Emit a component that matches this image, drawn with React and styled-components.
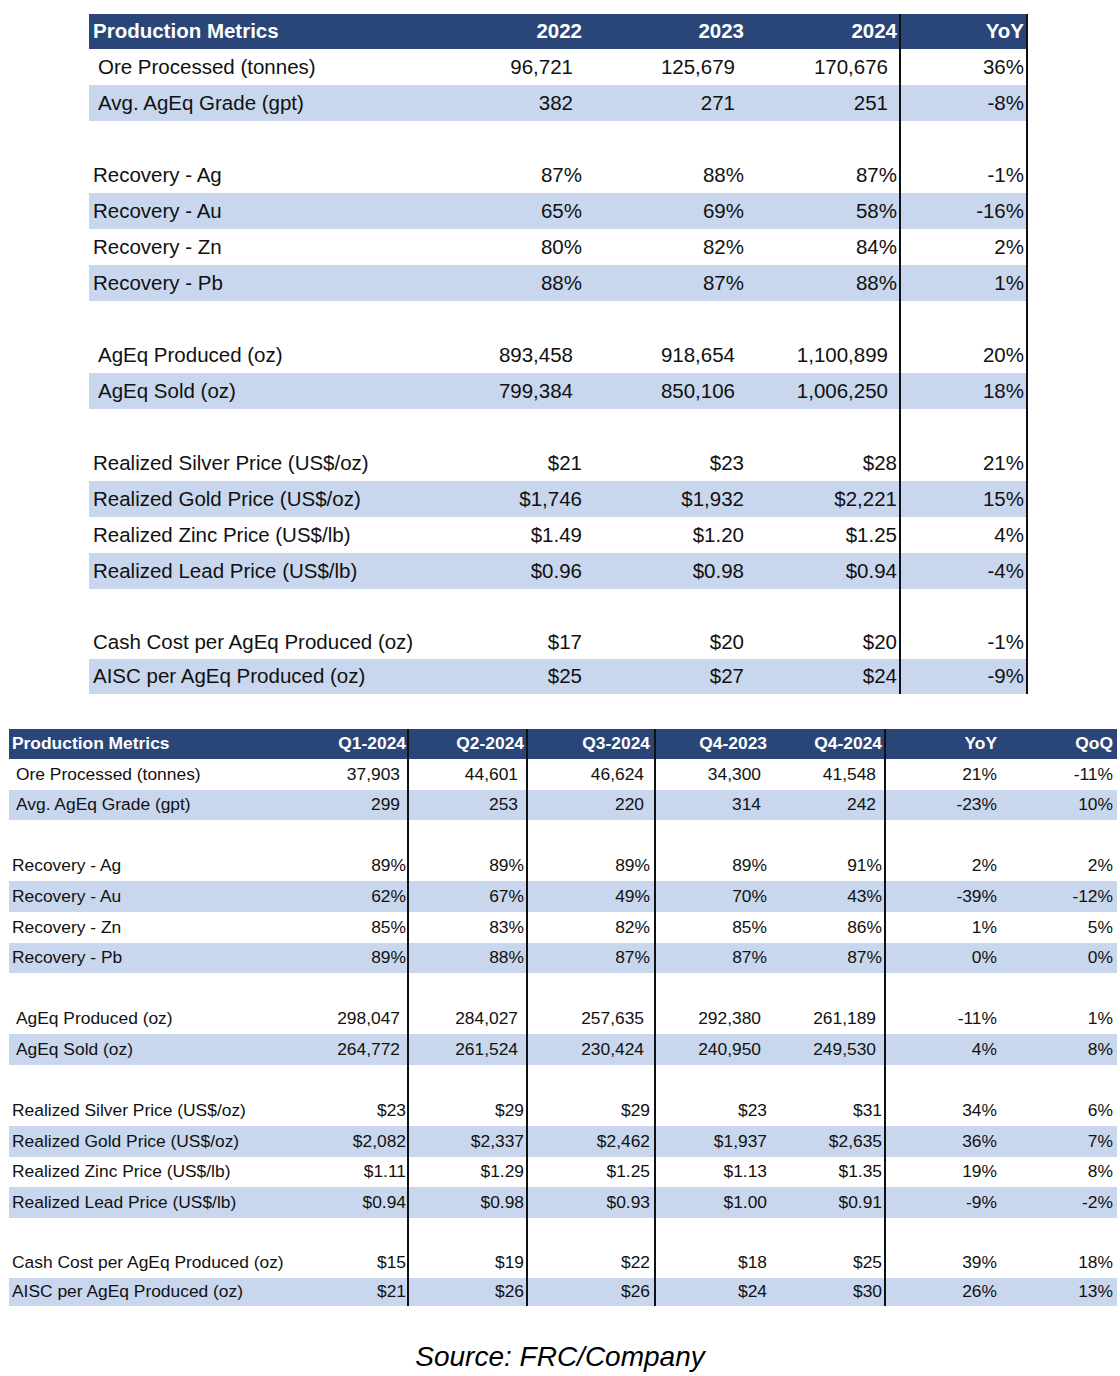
import React from 'react';
import styled, { createGlobalStyle } from 'styled-components';

const GlobalStyle = createGlobalStyle`
  body {
    margin: 0;
    background: #fff;
    color: #111;
    font-family: 'Liberation Sans', Arial, sans-serif;
  }
`;

const NAVY = '#2a4678';
const SHADE = '#c8d7ee';

const Page = styled.div`
  width: 1120px;
  padding-top: 14px;
  display: flex;
  flex-direction: column;
`;

const Grid = styled.div`
  display: grid;
  grid-template-columns: ${({ $cols }) => $cols};
  grid-template-rows: ${({ $rows }) => $rows};
  margin-left: ${({ $left }) => $left}px;
  margin-top: ${({ $top }) => $top || 0}px;
  width: max-content;
  font-size: ${({ $size }) => $size}px;
`;

const Cell = styled.div`
  display: flex;
  align-items: center;
  justify-content: ${({ $label }) => ($label ? 'flex-start' : 'flex-end')};
  padding: 0 ${({ $pr }) => $pr || 0}px 0 ${({ $pl }) => $pl || 0}px;
  background: ${({ $shade }) => ($shade ? SHADE : '#fff')};
  border-right: ${({ $rule }) => ($rule ? '2px solid #111' : '0')};
  white-space: nowrap;
  line-height: 1;
`;

const HeadCell = styled(Cell)`
  background: ${NAVY};
  color: #fff;
  font-weight: bold;
`;

const Source = styled.div`
  margin-top: 35px;
  text-align: center;
  font-style: italic;
  font-size: 28px;
  color: #000;
`;

// count rows: indented label and numbers padded like Excel's "#,##0 " format
const yearly = {
  head: ['Production Metrics', '2022', '2023', '2024', 'YoY'],
  rows: [
    { label: 'Ore Processed (tonnes)', count: true, v: ['96,721', '125,679', '170,676', '36%'] },
    { label: 'Avg. AgEq Grade (gpt)', count: true, shade: true, v: ['382', '271', '251', '-8%'] },
    null,
    { label: 'Recovery - Ag', v: ['87%', '88%', '87%', '-1%'] },
    { label: 'Recovery - Au', shade: true, v: ['65%', '69%', '58%', '-16%'] },
    { label: 'Recovery - Zn', v: ['80%', '82%', '84%', '2%'] },
    { label: 'Recovery - Pb', shade: true, v: ['88%', '87%', '88%', '1%'] },
    null,
    { label: 'AgEq Produced (oz)', count: true, v: ['893,458', '918,654', '1,100,899', '20%'] },
    { label: 'AgEq Sold (oz)', count: true, shade: true, v: ['799,384', '850,106', '1,006,250', '18%'] },
    null,
    { label: 'Realized Silver Price (US$/oz)', v: ['$21', '$23', '$28', '21%'] },
    { label: 'Realized Gold Price (US$/oz)', shade: true, v: ['$1,746', '$1,932', '$2,221', '15%'] },
    { label: 'Realized Zinc Price (US$/lb)', v: ['$1.49', '$1.20', '$1.25', '4%'] },
    { label: 'Realized Lead Price (US$/lb)', shade: true, v: ['$0.96', '$0.98', '$0.94', '-4%'] },
    null,
    { label: 'Cash Cost per AgEq Produced (oz)', v: ['$17', '$20', '$20', '-1%'] },
    { label: 'AISC per AgEq Produced (oz)', shade: true, v: ['$25', '$27', '$24', '-9%'] },
  ],
};

const quarterly = {
  head: ['Production Metrics', 'Q1-2024', 'Q2-2024', 'Q3-2024', 'Q4-2023', 'Q4-2024', 'YoY', 'QoQ'],
  rows: [
    { label: 'Ore Processed (tonnes)', count: true, v: ['37,903', '44,601', '46,624', '34,300', '41,548', '21%', '-11%'] },
    { label: 'Avg. AgEq Grade (gpt)', count: true, shade: true, v: ['299', '253', '220', '314', '242', '-23%', '10%'] },
    null,
    { label: 'Recovery - Ag', v: ['89%', '89%', '89%', '89%', '91%', '2%', '2%'] },
    { label: 'Recovery - Au', shade: true, v: ['62%', '67%', '49%', '70%', '43%', '-39%', '-12%'] },
    { label: 'Recovery - Zn', v: ['85%', '83%', '82%', '85%', '86%', '1%', '5%'] },
    { label: 'Recovery - Pb', shade: true, v: ['89%', '88%', '87%', '87%', '87%', '0%', '0%'] },
    null,
    { label: 'AgEq Produced (oz)', count: true, v: ['298,047', '284,027', '257,635', '292,380', '261,189', '-11%', '1%'] },
    { label: 'AgEq Sold (oz)', count: true, shade: true, v: ['264,772', '261,524', '230,424', '240,950', '249,530', '4%', '8%'] },
    null,
    { label: 'Realized Silver Price (US$/oz)', v: ['$23', '$29', '$29', '$23', '$31', '34%', '6%'] },
    { label: 'Realized Gold Price (US$/oz)', shade: true, v: ['$2,082', '$2,337', '$2,462', '$1,937', '$2,635', '36%', '7%'] },
    { label: 'Realized Zinc Price (US$/lb)', v: ['$1.11', '$1.29', '$1.25', '$1.13', '$1.35', '19%', '8%'] },
    { label: 'Realized Lead Price (US$/lb)', shade: true, v: ['$0.94', '$0.98', '$0.93', '$1.00', '$0.91', '-9%', '-2%'] },
    null,
    { label: 'Cash Cost per AgEq Produced (oz)', v: ['$15', '$19', '$22', '$18', '$25', '39%', '18%'] },
    { label: 'AISC per AgEq Produced (oz)', shade: true, v: ['$21', '$26', '$26', '$24', '$30', '26%', '13%'] },
  ],
};

const yearlyCols = [
  { w: 336, pl: 4, indent: 9 },
  { w: 160, pr: 3 },
  { w: 161, pr: 2 },
  { w: 155, pr: 2, rule: true },
  { w: 127, pr: 2, rule: true, rate: true },
];

const quarterlyCols = [
  { w: 286, pl: 3, indent: 7 },
  { w: 114, pr: 1, rule: true },
  { w: 119, pr: 2, rule: true },
  { w: 128, pr: 4, rule: true },
  { w: 114, pr: 3 },
  { w: 116, pr: 2, rule: true },
  { w: 114, pr: 3, rate: true },
  { w: 117, pr: 4, rate: true },
];

// header, 16 even rows, then the two shorter cost rows
const rowTrack = (head, row, last) => `${head}px repeat(16, ${row}px) ${last.map((h) => `${h}px`).join(' ')}`;

const MetricsTable = ({ data, cols, left, top, size, rows, numPad }) => (
  <Grid $cols={cols.map((c) => `${c.w}px`).join(' ')} $rows={rows} $left={left} $top={top} $size={size}>
    {data.head.map((h, i) => (
      <HeadCell key={`h-${i}`} $label={i === 0} $pl={cols[i].pl} $pr={cols[i].pr} $rule={cols[i].rule}>
        {h}
      </HeadCell>
    ))}
    {data.rows.map((r, ri) =>
      cols.map((c, ci) => {
        if (!r) {
          return <Cell key={`${ri}-${ci}`} $rule={c.rule} />;
        }
        if (ci === 0) {
          return (
            <Cell key={`${ri}-${ci}`} $label $shade={r.shade} $pl={r.count ? c.indent : c.pl}>
              {r.label}
            </Cell>
          );
        }
        const pad = r.count && !c.rate ? c.pr + numPad : c.pr;
        return (
          <Cell key={`${ri}-${ci}`} $shade={r.shade} $pr={pad} $rule={c.rule}>
            {r.v[ci - 1]}
          </Cell>
        );
      })
    )}
  </Grid>
);

export default function App() {
  return (
    <Page>
      <GlobalStyle />
      <MetricsTable
        data={yearly}
        cols={yearlyCols}
        left={89}
        size={20.5}
        rows={rowTrack(35, 36, [34, 35])}
        numPad={9}
      />
      <MetricsTable
        data={quarterly}
        cols={quarterlyCols}
        left={9}
        top={35}
        size={17.4}
        rows={rowTrack(30, 30.6, [29, 28.5])}
        numPad={6}
      />
      <Source>Source: FRC/Company</Source>
    </Page>
  );
}
